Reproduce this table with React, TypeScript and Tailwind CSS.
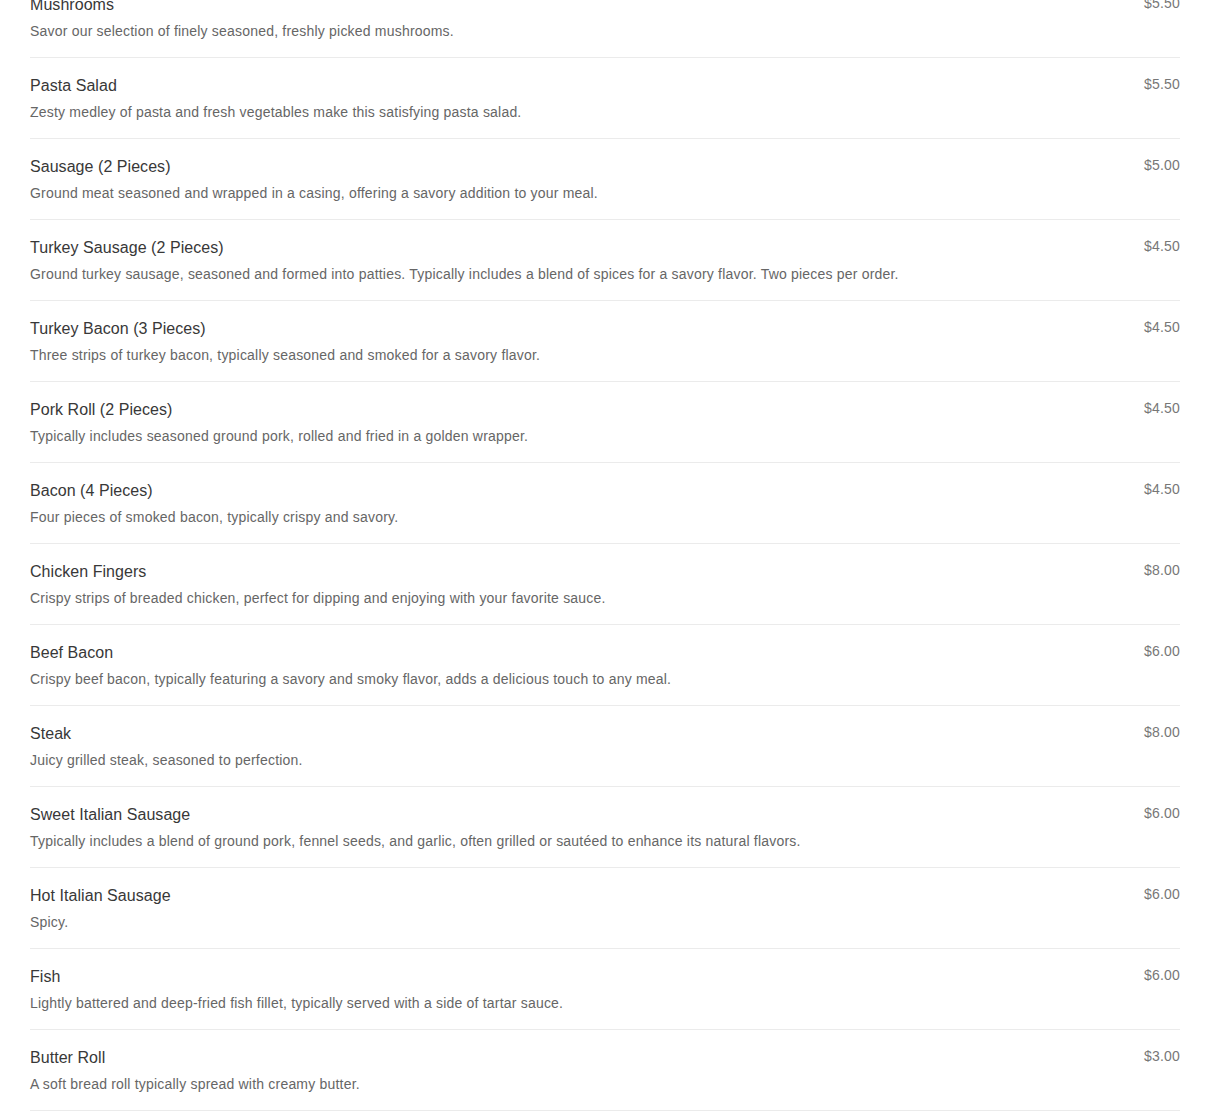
import React from "react";

const items = [
  ["Mushrooms", "Savor our selection of finely seasoned, freshly picked mushrooms.", "$5.50"],
  ["Pasta Salad", "Zesty medley of pasta and fresh vegetables make this satisfying pasta salad.", "$5.50"],
  ["Sausage (2 Pieces)", "Ground meat seasoned and wrapped in a casing, offering a savory addition to your meal.", "$5.00"],
  ["Turkey Sausage (2 Pieces)", "Ground turkey sausage, seasoned and formed into patties. Typically includes a blend of spices for a savory flavor. Two pieces per order.", "$4.50"],
  ["Turkey Bacon (3 Pieces)", "Three strips of turkey bacon, typically seasoned and smoked for a savory flavor.", "$4.50"],
  ["Pork Roll (2 Pieces)", "Typically includes seasoned ground pork, rolled and fried in a golden wrapper.", "$4.50"],
  ["Bacon (4 Pieces)", "Four pieces of smoked bacon, typically crispy and savory.", "$4.50"],
  ["Chicken Fingers", "Crispy strips of breaded chicken, perfect for dipping and enjoying with your favorite sauce.", "$8.00"],
  ["Beef Bacon", "Crispy beef bacon, typically featuring a savory and smoky flavor, adds a delicious touch to any meal.", "$6.00"],
  ["Steak", "Juicy grilled steak, seasoned to perfection.", "$8.00"],
  ["Sweet Italian Sausage", "Typically includes a blend of ground pork, fennel seeds, and garlic, often grilled or sautéed to enhance its natural flavors.", "$6.00"],
  ["Hot Italian Sausage", "Spicy.", "$6.00"],
  ["Fish", "Lightly battered and deep-fried fish fillet, typically served with a side of tartar sauce.", "$6.00"],
  ["Butter Roll", "A soft bread roll typically spread with creamy butter.", "$3.00"],
];

export default function App() {
  return (
    <div className="h-[1114px] overflow-hidden bg-white font-['Liberation_Sans',Arial,sans-serif]">
      <div className="-mt-[23px] px-[30px]">
        {items.map(([name, desc, price]) => (
          <div key={name} className="flex justify-between border-b border-[#ebebeb] pt-[15px] pb-[15px]">
            <div className="min-w-0">
              <div className="mt-[1px] text-[16px] leading-[24px] tracking-[0.05px] text-[#383838]">{name}</div>
              <div className="mt-[3px] text-[14px] leading-[22px] tracking-[0.2px] text-[#666666]">{desc}</div>
            </div>
            <div className="shrink-0 pl-4 text-[14px] leading-[22px] tracking-[0.2px] text-[#777777]">{price}</div>
          </div>
        ))}
      </div>
    </div>
  );
}
